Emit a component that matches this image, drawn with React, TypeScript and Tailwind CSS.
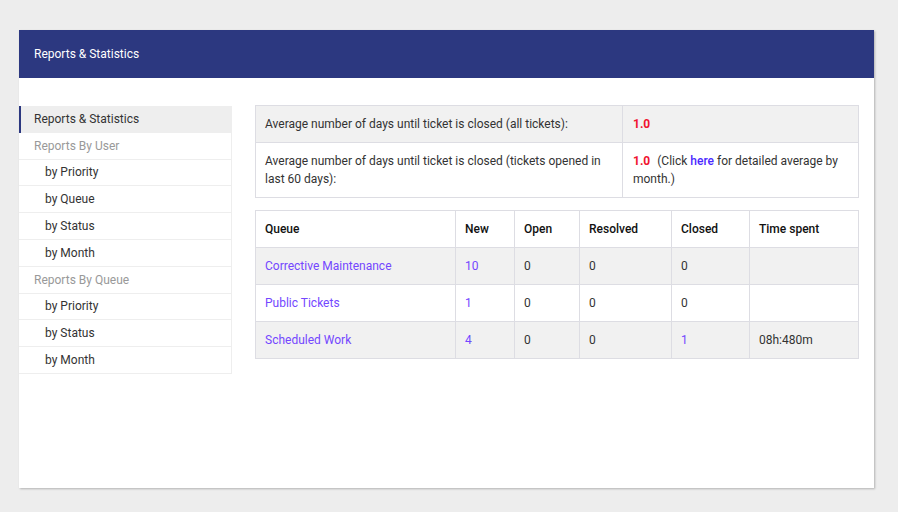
import React from "react";

const sideItems = [
  { label: "Reports & Statistics", kind: "active" },
  { label: "Reports By User", kind: "head" },
  { label: "by Priority", kind: "sub" },
  { label: "by Queue", kind: "sub" },
  { label: "by Status", kind: "sub" },
  { label: "by Month", kind: "sub" },
  { label: "Reports By Queue", kind: "head" },
  { label: "by Priority", kind: "sub" },
  { label: "by Status", kind: "sub" },
  { label: "by Month", kind: "sub" },
];

const rows = [
  { queue: "Corrective Maintenance", n: "10", open: "0", resolved: "0", closed: "0", closedLink: false, time: "" },
  { queue: "Public Tickets", n: "1", open: "0", resolved: "0", closed: "0", closedLink: false, time: "" },
  { queue: "Scheduled Work", n: "4", open: "0", resolved: "0", closed: "1", closedLink: true, time: "08h:480m" },
];

export default function App() {
  return (
    <div
      className="min-h-[512px] w-full bg-[#ededed] pt-[30px] px-[19px] pb-6 text-[12px] text-[#333]"
      style={{ fontFamily: "Roboto, 'Liberation Sans', sans-serif" }}
    >
      <div className="w-[855px] h-[458px] bg-white shadow-[1px_1px_2px_rgba(0,0,0,0.25)]">
        <div className="h-[48px] bg-[#2c3880] flex items-center px-[15px] text-white text-[12px]">
          Reports &amp; Statistics
        </div>

        <div className="flex pt-[27px]">
          {/* sidebar */}
          <div className="w-[213px] shrink-0 pt-[1px]">
            {sideItems.map((it, i) => (
              <div
                key={i}
                className={
                  it.kind === "active"
                    ? "h-[26.8px] flex items-center pl-[13px] bg-[#eeeeee] border-l-2 border-[#2c3880] text-[#333]"
                    : it.kind === "head"
                    ? "h-[26.8px] flex items-center pl-[15px] border-b border-r border-[#eeeeee] text-[#999]"
                    : "h-[26.8px] flex items-center pl-[26px] border-b border-r border-[#eeeeee] text-[#333]"
                }
              >
                {it.label}
              </div>
            ))}
          </div>

          {/* content */}
          <div className="ml-[23px] w-[604px]">
            <table className="w-full border-collapse border border-[#dddde3]">
              <tbody>
                <tr className="bg-[#f1f1f1] h-[37px]">
                  <td className="border border-[#dddde3] px-[9px] w-[367px]">
                    Average number of days until ticket is closed (all tickets):
                  </td>
                  <td className="border border-[#dddde3] px-[10px] font-bold text-[#f0142f]">1.0</td>
                </tr>
                <tr className="h-[55px]">
                  <td className="border border-[#dddde3] px-[9px] leading-[18px]">
                    Average number of days until ticket is closed (tickets opened in last 60 days):
                  </td>
                  <td className="border border-[#dddde3] px-[10px] leading-[18px]">
                    <span className="font-bold text-[#f0142f]">1.0</span>
                    <span className="ml-[7px]">(Click </span>
                    <a className="text-[#4b2aff] font-medium">here</a> for detailed average by month.)
                  </td>
                </tr>
              </tbody>
            </table>

            <table className="w-full mt-[12px] border-collapse border border-[#dddde3]">
              <thead>
                <tr className="h-[37px] text-left text-[#111]">
                  <th className="border border-[#dddde3] px-[9px] w-[200px] font-medium">Queue</th>
                  <th className="border border-[#dddde3] px-[9px] w-[59px] font-medium">New</th>
                  <th className="border border-[#dddde3] px-[9px] w-[65px] font-medium">Open</th>
                  <th className="border border-[#dddde3] px-[9px] w-[92px] font-medium">Resolved</th>
                  <th className="border border-[#dddde3] px-[9px] w-[78px] font-medium">Closed</th>
                  <th className="border border-[#dddde3] px-[9px] font-medium">Time spent</th>
                </tr>
              </thead>
              <tbody>
                {rows.map((r, i) => (
                  <tr key={i} className={"h-[37px] " + (i % 2 === 0 ? "bg-[#f1f1f1]" : "bg-white")}>
                    <td className="border border-[#dddde3] px-[9px] text-[#7447ff]">{r.queue}</td>
                    <td className="border border-[#dddde3] px-[9px] text-[#7447ff]">{r.n}</td>
                    <td className="border border-[#dddde3] px-[9px]">{r.open}</td>
                    <td className="border border-[#dddde3] px-[9px]">{r.resolved}</td>
                    <td className={"border border-[#dddde3] px-[9px] " + (r.closedLink ? "text-[#7447ff]" : "")}>
                      {r.closed}
                    </td>
                    <td className="border border-[#dddde3] px-[9px]">{r.time}</td>
                  </tr>
                ))}
              </tbody>
            </table>
          </div>
        </div>
      </div>
    </div>
  );
}
